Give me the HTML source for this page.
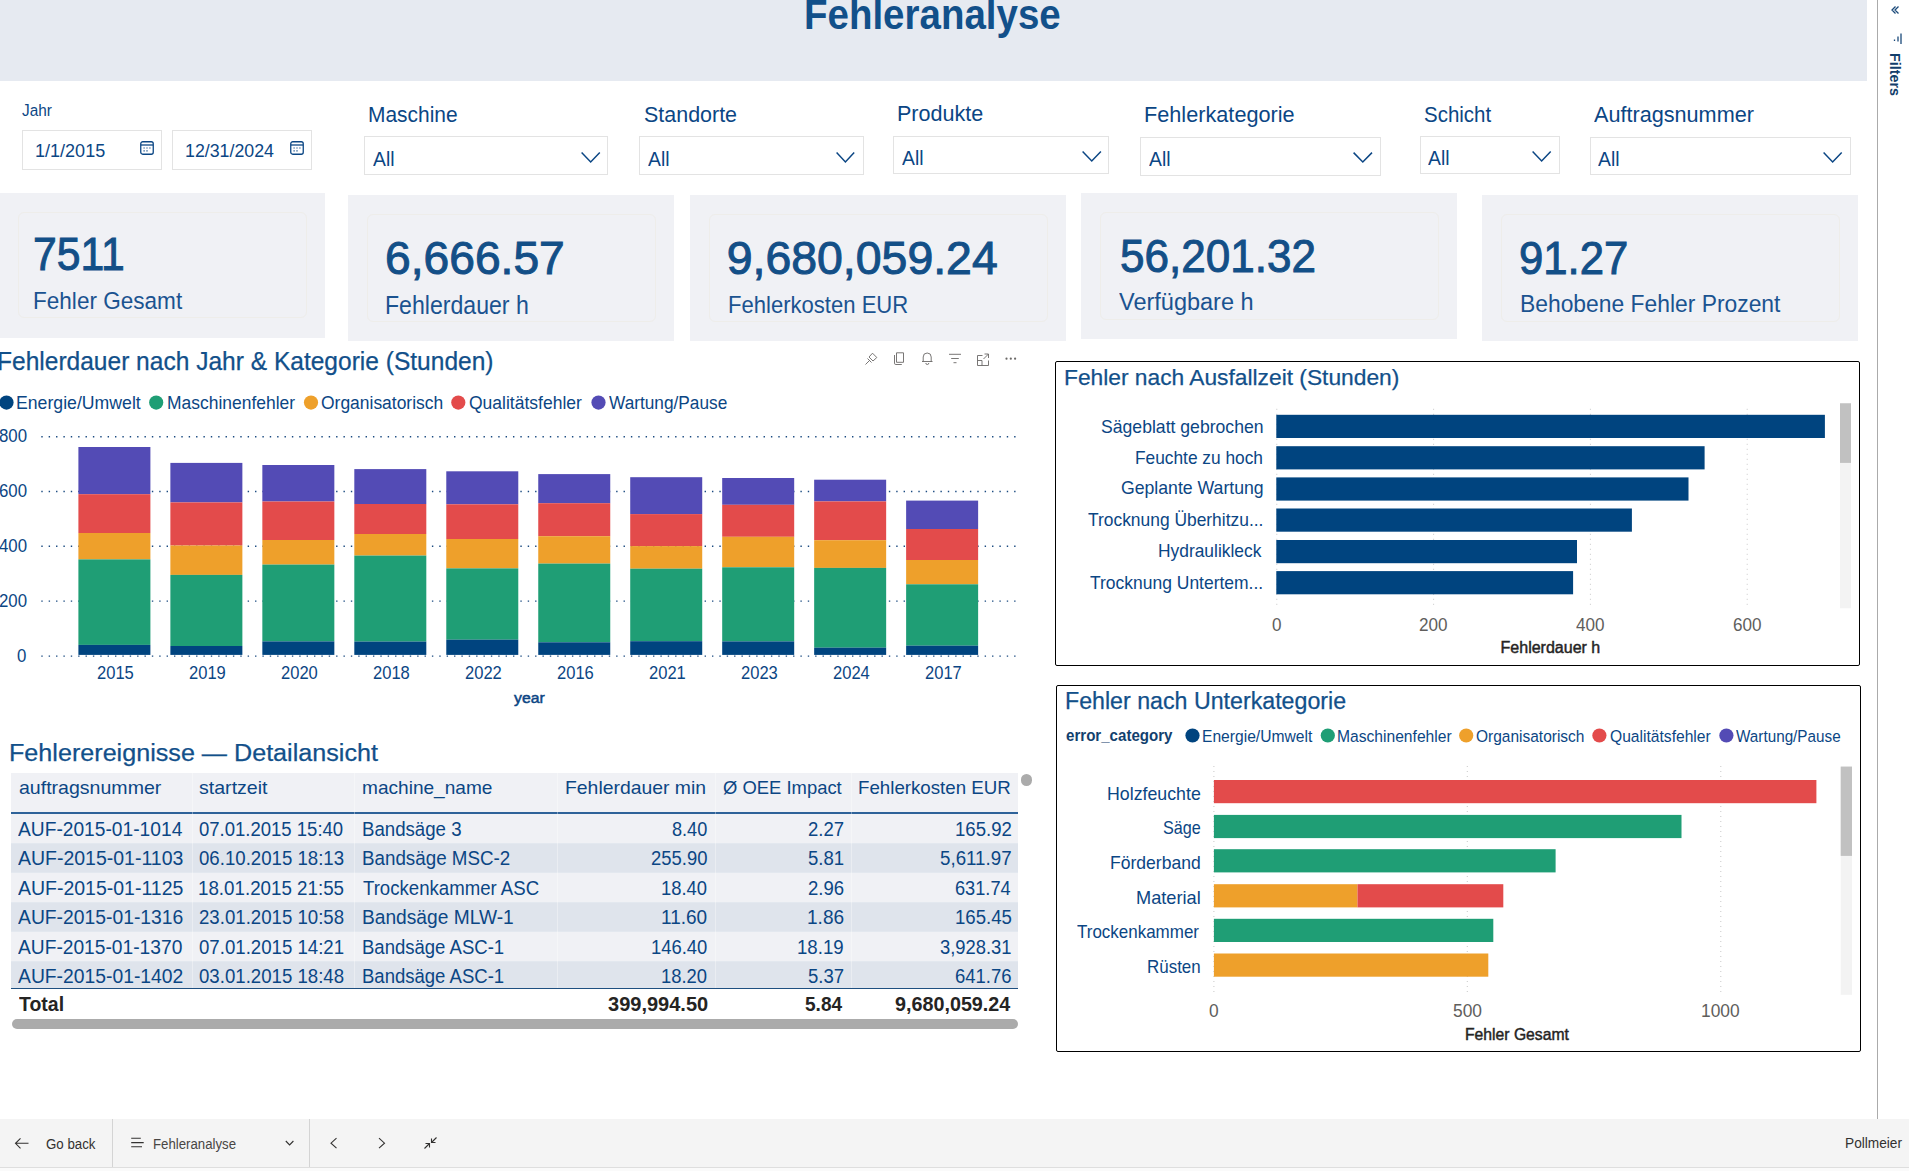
<!DOCTYPE html>
<html><head><meta charset="utf-8"><title>Fehleranalyse</title>
<style>
html,body{margin:0;padding:0;}
body{width:1909px;height:1171px;position:relative;overflow:hidden;background:#fff;font-family:'Liberation Sans', sans-serif;}
.t{position:absolute;line-height:1;white-space:nowrap;transform-origin:0 0;}
svg{position:absolute;overflow:visible;}
</style></head><body>
<div style="position:absolute;left:0px;top:0px;width:1867px;height:81px;background:#E6EAF1;"></div>
<div class="t" style="left:804.17px;top:-6.40px;font-size:42px;color:#12508A;font-weight:bold;transform:scaleX(0.9162);">Fehleranalyse</div>
<div style="position:absolute;left:1877px;top:0px;width:1px;height:1119px;background:#ABABAB;"></div>
<svg style="left:1888.5px;top:4px" width="12" height="12" viewBox="0 0 12 12"><path d="M6.5 2.5 L3 6 L6.5 9.5 M9.5 2.5 L6 6 L9.5 9.5" fill="none" stroke="#1B4A7A" stroke-width="1.3"/></svg>
<svg style="left:1890px;top:32px" width="14" height="14" viewBox="0 0 14 14"><path d="M11 1.5 V12 M8 4.5 V9.5 M4.5 7.5 V9" fill="none" stroke="#1B4A7A" stroke-width="1.3"/></svg>
<div style="position:absolute;left:1886px;top:52px;width:20px;height:50px;"><div style="position:absolute;left:15.8px;top:0.5px;transform-origin:0 0;transform:rotate(90deg);font-size:14.3px;font-weight:bold;line-height:1;color:#123E6B;white-space:nowrap;letter-spacing:0px">Filters</div></div>
<div class="t" style="left:21.50px;top:102.00px;font-size:16.43px;color:#0B4684;transform:scaleX(0.9360);">Jahr</div>
<div style="position:absolute;left:22px;top:130px;width:140px;height:40px;background:#fff;box-sizing:border-box;border:1.5px solid #E3E3E3"></div>
<div style="position:absolute;left:172px;top:130px;width:140px;height:40px;background:#fff;box-sizing:border-box;border:1.5px solid #E3E3E3"></div>
<div class="t" style="left:34.60px;top:142.00px;font-size:18.0px;color:#0B4684;transform:scaleX(1.0021);">1/1/2015</div>
<div class="t" style="left:185.41px;top:141.60px;font-size:18.0px;color:#0B4684;transform:scaleX(0.9879);">12/31/2024</div>
<svg style="left:140px;top:141px" width="14" height="14" viewBox="0 0 14 14"><rect x="0.75" y="0.75" width="12.5" height="12.5" rx="2" fill="none" stroke="#0B4684" stroke-width="1.3"/><path d="M1 4 H13" stroke="#0B4684" stroke-width="1.3"/><path d="M3.5 7 h1.2 M6.4 7 h1.2 M9.3 7 h1.2 M3.5 9.8 h1.2 M6.4 9.8 h1.2" stroke="#0B4684" stroke-width="1.2"/></svg>
<svg style="left:290px;top:141px" width="14" height="14" viewBox="0 0 14 14"><rect x="0.75" y="0.75" width="12.5" height="12.5" rx="2" fill="none" stroke="#0B4684" stroke-width="1.3"/><path d="M1 4 H13" stroke="#0B4684" stroke-width="1.3"/><path d="M3.5 7 h1.2 M6.4 7 h1.2 M9.3 7 h1.2 M3.5 9.8 h1.2 M6.4 9.8 h1.2" stroke="#0B4684" stroke-width="1.2"/></svg>
<div class="t" style="left:367.82px;top:104.90px;font-size:21.29px;color:#0B4684;transform:scaleX(0.9838);">Maschine</div>
<div style="position:absolute;left:364px;top:136px;width:244px;height:39px;background:#fff;box-sizing:border-box;border:1.5px solid #E3E3E3"></div>
<div class="t" style="left:373.00px;top:148.70px;font-size:20.29px;color:#0B4684;transform:scaleX(0.9531);">All</div>
<svg style="left:580.8px;top:151.7px" width="19.4" height="11" viewBox="0 0 19.4 11"><path d="M0.6 0.6 L9.70 10 L18.80 0.6" fill="none" stroke="#0B4684" stroke-width="1.5"/></svg>
<div class="t" style="left:643.60px;top:105.20px;font-size:21.29px;color:#0B4684;transform:scaleX(1.0082);">Standorte</div>
<div style="position:absolute;left:639px;top:136px;width:225px;height:39px;background:#fff;box-sizing:border-box;border:1.5px solid #E3E3E3"></div>
<div class="t" style="left:648.00px;top:148.60px;font-size:20.29px;color:#0B4684;transform:scaleX(0.9531);">All</div>
<svg style="left:836.0px;top:151.6px" width="18.8" height="11" viewBox="0 0 18.8 11"><path d="M0.6 0.6 L9.40 10 L18.20 0.6" fill="none" stroke="#0B4684" stroke-width="1.5"/></svg>
<div class="t" style="left:897.39px;top:104.30px;font-size:21.29px;color:#0B4684;transform:scaleX(1.0127);">Produkte</div>
<div style="position:absolute;left:893px;top:136px;width:216px;height:38px;background:#fff;box-sizing:border-box;border:1.5px solid #E3E3E3"></div>
<div class="t" style="left:901.70px;top:148.00px;font-size:20.29px;color:#0B4684;transform:scaleX(0.9531);">All</div>
<svg style="left:1081.7px;top:151.0px" width="19.5" height="11" viewBox="0 0 19.5 11"><path d="M0.6 0.6 L9.75 10 L18.90 0.6" fill="none" stroke="#0B4684" stroke-width="1.5"/></svg>
<div class="t" style="left:1143.78px;top:104.90px;font-size:21.29px;color:#0B4684;transform:scaleX(1.0190);">Fehlerkategorie</div>
<div style="position:absolute;left:1140px;top:137px;width:241px;height:39px;background:#fff;box-sizing:border-box;border:1.5px solid #E3E3E3"></div>
<div class="t" style="left:1148.80px;top:148.90px;font-size:20.29px;color:#0B4684;transform:scaleX(0.9531);">All</div>
<svg style="left:1352.9px;top:151.89999999999998px" width="19.6" height="11" viewBox="0 0 19.6 11"><path d="M0.6 0.6 L9.80 10 L19.00 0.6" fill="none" stroke="#0B4684" stroke-width="1.5"/></svg>
<div class="t" style="left:1424.00px;top:104.50px;font-size:21.29px;color:#0B4684;transform:scaleX(0.9631);">Schicht</div>
<div style="position:absolute;left:1420px;top:136px;width:140px;height:38px;background:#fff;box-sizing:border-box;border:1.5px solid #E3E3E3"></div>
<div class="t" style="left:1428.20px;top:148.20px;font-size:20.29px;color:#0B4684;transform:scaleX(0.9531);">All</div>
<svg style="left:1531.6px;top:151.2px" width="19.3" height="11" viewBox="0 0 19.3 11"><path d="M0.6 0.6 L9.65 10 L18.70 0.6" fill="none" stroke="#0B4684" stroke-width="1.5"/></svg>
<div class="t" style="left:1594.00px;top:104.90px;font-size:21.29px;color:#0B4684;transform:scaleX(1.0164);">Auftragsnummer</div>
<div style="position:absolute;left:1590px;top:137px;width:261px;height:38px;background:#fff;box-sizing:border-box;border:1.5px solid #E3E3E3"></div>
<div class="t" style="left:1598.20px;top:149.20px;font-size:20.29px;color:#0B4684;transform:scaleX(0.9531);">All</div>
<svg style="left:1822.5px;top:152.2px" width="19.3" height="11" viewBox="0 0 19.3 11"><path d="M0.6 0.6 L9.65 10 L18.70 0.6" fill="none" stroke="#0B4684" stroke-width="1.5"/></svg>
<div style="position:absolute;left:0px;top:193px;width:325px;height:145px;background:#F0F1F5;"></div>
<div style="position:absolute;left:348px;top:195px;width:326px;height:146px;background:#F0F1F5;"></div>
<div style="position:absolute;left:690px;top:195px;width:376px;height:146px;background:#F0F1F5;"></div>
<div style="position:absolute;left:1081px;top:193px;width:376px;height:146px;background:#F0F1F5;"></div>
<div style="position:absolute;left:1482px;top:195px;width:376px;height:146px;background:#F0F1F5;"></div>
<div style="position:absolute;left:18px;top:211.5px;width:288.5px;height:106.5px;background:transparent;box-sizing:border-box;border:1px solid #EEEDEA;border-radius:6px"></div>
<div style="position:absolute;left:366.5px;top:213.5px;width:289px;height:108.5px;background:transparent;box-sizing:border-box;border:1px solid #EEEDEA;border-radius:6px"></div>
<div style="position:absolute;left:708.5px;top:213.5px;width:339.5px;height:108px;background:transparent;box-sizing:border-box;border:1px solid #EEEDEA;border-radius:6px"></div>
<div style="position:absolute;left:1100px;top:211.5px;width:338.5px;height:108.5px;background:transparent;box-sizing:border-box;border:1px solid #EEEDEA;border-radius:6px"></div>
<div style="position:absolute;left:1501px;top:213.5px;width:338.5px;height:108px;background:transparent;box-sizing:border-box;border:1px solid #EEEDEA;border-radius:6px"></div>
<div class="t" style="left:32.99px;top:229.80px;font-size:47.14px;color:#134F87;transform:scaleX(0.9060);-webkit-text-stroke:1px #134F87;">7511</div>
<div class="t" style="left:32.96px;top:289.20px;font-size:24.57px;color:#1B5390;transform:scaleX(0.9183);">Fehler Gesamt</div>
<div class="t" style="left:384.91px;top:234.50px;font-size:46.43px;color:#134F87;transform:scaleX(0.9950);-webkit-text-stroke:1px #134F87;">6,666.57</div>
<div class="t" style="left:385.05px;top:292.80px;font-size:25.0px;color:#1B5390;transform:scaleX(0.9237);">Fehlerdauer h</div>
<div class="t" style="left:726.70px;top:234.70px;font-size:46.43px;color:#134F87;-webkit-text-stroke:1px #134F87;">9,680,059.24</div>
<div class="t" style="left:727.78px;top:293.00px;font-size:23.86px;color:#1B5390;transform:scaleX(0.9246);">Fehlerkosten EUR</div>
<div class="t" style="left:1120.46px;top:231.80px;font-size:47.0px;color:#134F87;transform:scaleX(0.9371);-webkit-text-stroke:1px #134F87;">56,201.32</div>
<div class="t" style="left:1118.90px;top:290.50px;font-size:23.57px;color:#1B5390;transform:scaleX(0.9976);">Verfügbare h</div>
<div class="t" style="left:1518.64px;top:233.90px;font-size:47.0px;color:#134F87;transform:scaleX(0.9297);-webkit-text-stroke:1px #134F87;">91.27</div>
<div class="t" style="left:1519.56px;top:291.80px;font-size:24.29px;color:#1B5390;transform:scaleX(0.9410);">Behobene Fehler Prozent</div>
<div class="t" style="left:-3.45px;top:349.00px;font-size:25.14px;color:#12508A;transform:scaleX(0.9766);-webkit-text-stroke:0.25px #12508A;">Fehlerdauer nach Jahr &amp; Kategorie (Stunden)</div>
<svg style="left:862px;top:350px" width="160" height="18" viewBox="862 350 160 18">
<g fill="none" stroke="#6A6866" stroke-width="0.9">
<path d="M865.5 364.5 L869.5 360.5 M867.5 358.5 L871.5 362.5 M869 357 L872.5 353.2 L876.8 357.5 L873 361 Z"/>
<path d="M896.5 352.8 h7 v9.5 h-7 z M894.5 355 v8.2 a1.3 1.3 0 0 0 1.3 1.3 h6"/>
<path d="M922 361.5 h10.5 M923.2 361.5 v-4.5 a4 4 0 0 1 8 0 v4.5 M925.8 363 a1.5 1.5 0 0 0 3 0"/>
<path d="M949 354.3 h12 M951.2 358.5 h7.6 M953.5 362.7 h3"/>
<path d="M982.5 355.5 H977.5 V365.5 H988.5 V360.5 M983.5 359 L988.5 354 M984.5 354 H988.5 V358 M977.5 360.5 H982 V365.5"/>
</g>
<g fill="#6A6866"><circle cx="1006.5" cy="358.7" r="1.1"/><circle cx="1010.8" cy="358.7" r="1.1"/><circle cx="1015.1" cy="358.7" r="1.1"/></g>
</svg>
<svg style="left:0px;top:0px" width="1" height="1" viewBox="0 0 1 1"><circle cx="6.5" cy="402.6" r="7.1" fill="#00447F"/><circle cx="156.2" cy="402.6" r="7.1" fill="#1F9E75"/><circle cx="311.0" cy="402.6" r="7.1" fill="#EEA02B"/><circle cx="458.3" cy="402.6" r="7.1" fill="#E34B4B"/><circle cx="598.5" cy="402.6" r="7.1" fill="#534BB5"/></svg>
<div class="t" style="left:16.01px;top:394.50px;font-size:17.86px;color:#0B4684;transform:scaleX(0.9897);">Energie/Umwelt</div>
<div class="t" style="left:166.52px;top:394.50px;font-size:17.86px;color:#0B4684;transform:scaleX(0.9778);">Maschinenfehler</div>
<div class="t" style="left:321.40px;top:394.50px;font-size:17.86px;color:#0B4684;transform:scaleX(0.9772);">Organisatorisch</div>
<div class="t" style="left:469.10px;top:394.50px;font-size:17.86px;color:#0B4684;transform:scaleX(0.9800);">Qualitätsfehler</div>
<div class="t" style="left:608.90px;top:394.50px;font-size:17.86px;color:#0B4684;transform:scaleX(0.9657);">Wartung/Pause</div>
<svg style="left:0px;top:0px" width="1" height="1" viewBox="0 0 1 1"><line x1="41.3" y1="436.8" x2="1018" y2="436.8" stroke="#1A4A80" stroke-width="1.4" stroke-dasharray="1.4 5.97"/><line x1="41.3" y1="491.5" x2="1018" y2="491.5" stroke="#1A4A80" stroke-width="1.4" stroke-dasharray="1.4 5.97"/><line x1="41.3" y1="546.3" x2="1018" y2="546.3" stroke="#1A4A80" stroke-width="1.4" stroke-dasharray="1.4 5.97"/><line x1="41.3" y1="601.1" x2="1018" y2="601.1" stroke="#1A4A80" stroke-width="1.4" stroke-dasharray="1.4 5.97"/><line x1="41.3" y1="656.1" x2="1018" y2="656.1" stroke="#1A4A80" stroke-width="1.4" stroke-dasharray="1.4 5.97"/><rect x="78.40" y="447" width="72" height="47.20" fill="#534BB5"/><rect x="78.40" y="494.2" width="72" height="38.80" fill="#E34B4B"/><rect x="78.40" y="533" width="72" height="26.40" fill="#EEA02B"/><rect x="78.40" y="559.4" width="72" height="85.50" fill="#1F9E75"/><rect x="78.40" y="644.9" width="72" height="10.00" fill="#00447F"/><rect x="170.37" y="462.9" width="72" height="39.50" fill="#534BB5"/><rect x="170.37" y="502.4" width="72" height="43.10" fill="#E34B4B"/><rect x="170.37" y="545.5" width="72" height="29.40" fill="#EEA02B"/><rect x="170.37" y="574.9" width="72" height="71.10" fill="#1F9E75"/><rect x="170.37" y="646" width="72" height="8.90" fill="#00447F"/><rect x="262.34" y="465" width="72" height="36.50" fill="#534BB5"/><rect x="262.34" y="501.5" width="72" height="38.50" fill="#E34B4B"/><rect x="262.34" y="540" width="72" height="24.60" fill="#EEA02B"/><rect x="262.34" y="564.6" width="72" height="76.80" fill="#1F9E75"/><rect x="262.34" y="641.4" width="72" height="13.50" fill="#00447F"/><rect x="354.31" y="469.1" width="72" height="34.90" fill="#534BB5"/><rect x="354.31" y="504" width="72" height="30.00" fill="#E34B4B"/><rect x="354.31" y="534" width="72" height="21.60" fill="#EEA02B"/><rect x="354.31" y="555.6" width="72" height="86.00" fill="#1F9E75"/><rect x="354.31" y="641.6" width="72" height="13.30" fill="#00447F"/><rect x="446.28" y="471.3" width="72" height="33.00" fill="#534BB5"/><rect x="446.28" y="504.3" width="72" height="34.70" fill="#E34B4B"/><rect x="446.28" y="539" width="72" height="29.40" fill="#EEA02B"/><rect x="446.28" y="568.4" width="72" height="71.30" fill="#1F9E75"/><rect x="446.28" y="639.7" width="72" height="15.20" fill="#00447F"/><rect x="538.25" y="474.1" width="72" height="29.10" fill="#534BB5"/><rect x="538.25" y="503.2" width="72" height="33.00" fill="#E34B4B"/><rect x="538.25" y="536.2" width="72" height="27.40" fill="#EEA02B"/><rect x="538.25" y="563.6" width="72" height="78.70" fill="#1F9E75"/><rect x="538.25" y="642.3" width="72" height="12.60" fill="#00447F"/><rect x="630.22" y="477.2" width="72" height="36.90" fill="#534BB5"/><rect x="630.22" y="514.1" width="72" height="32.00" fill="#E34B4B"/><rect x="630.22" y="546.1" width="72" height="22.60" fill="#EEA02B"/><rect x="630.22" y="568.7" width="72" height="72.50" fill="#1F9E75"/><rect x="630.22" y="641.2" width="72" height="13.70" fill="#00447F"/><rect x="722.19" y="478" width="72" height="26.80" fill="#534BB5"/><rect x="722.19" y="504.8" width="72" height="32.00" fill="#E34B4B"/><rect x="722.19" y="536.8" width="72" height="30.50" fill="#EEA02B"/><rect x="722.19" y="567.3" width="72" height="74.10" fill="#1F9E75"/><rect x="722.19" y="641.4" width="72" height="13.50" fill="#00447F"/><rect x="814.16" y="479.7" width="72" height="21.70" fill="#534BB5"/><rect x="814.16" y="501.4" width="72" height="38.80" fill="#E34B4B"/><rect x="814.16" y="540.2" width="72" height="27.70" fill="#EEA02B"/><rect x="814.16" y="567.9" width="72" height="79.80" fill="#1F9E75"/><rect x="814.16" y="647.7" width="72" height="7.20" fill="#00447F"/><rect x="906.13" y="500.6" width="72" height="28.40" fill="#534BB5"/><rect x="906.13" y="529" width="72" height="31.00" fill="#E34B4B"/><rect x="906.13" y="560" width="72" height="24.30" fill="#EEA02B"/><rect x="906.13" y="584.3" width="72" height="61.40" fill="#1F9E75"/><rect x="906.13" y="645.7" width="72" height="9.20" fill="#00447F"/></svg>
<div class="t" style="left:-1.31px;top:427.20px;font-size:18.29px;color:#0B4684;transform:scaleX(0.9200);">800</div>
<div class="t" style="left:-1.31px;top:481.90px;font-size:18.29px;color:#0B4684;transform:scaleX(0.9200);">600</div>
<div class="t" style="left:-1.31px;top:536.70px;font-size:18.29px;color:#0B4684;transform:scaleX(0.9200);">400</div>
<div class="t" style="left:-1.31px;top:591.50px;font-size:18.29px;color:#0B4684;transform:scaleX(0.9200);">200</div>
<div class="t" style="left:17.40px;top:646.50px;font-size:18.29px;color:#0B4684;transform:scaleX(0.9200);">0</div>
<div class="t" style="left:96.80px;top:663.90px;font-size:18.43px;color:#0B4684;transform:scaleX(0.8985);">2015</div>
<div class="t" style="left:188.77px;top:663.90px;font-size:18.43px;color:#0B4684;transform:scaleX(0.8985);">2019</div>
<div class="t" style="left:280.74px;top:663.90px;font-size:18.43px;color:#0B4684;transform:scaleX(0.8985);">2020</div>
<div class="t" style="left:372.71px;top:663.90px;font-size:18.43px;color:#0B4684;transform:scaleX(0.8985);">2018</div>
<div class="t" style="left:464.68px;top:663.90px;font-size:18.43px;color:#0B4684;transform:scaleX(0.8985);">2022</div>
<div class="t" style="left:556.65px;top:663.90px;font-size:18.43px;color:#0B4684;transform:scaleX(0.8985);">2016</div>
<div class="t" style="left:648.62px;top:663.90px;font-size:18.43px;color:#0B4684;transform:scaleX(0.8985);">2021</div>
<div class="t" style="left:740.59px;top:663.90px;font-size:18.43px;color:#0B4684;transform:scaleX(0.8985);">2023</div>
<div class="t" style="left:832.56px;top:663.90px;font-size:18.43px;color:#0B4684;transform:scaleX(0.8985);">2024</div>
<div class="t" style="left:924.53px;top:663.90px;font-size:18.43px;color:#0B4684;transform:scaleX(0.8985);">2017</div>
<div class="t" style="left:514.00px;top:690.00px;font-size:15.5px;color:#0B4684;transform:scaleX(1.0170);-webkit-text-stroke:0.5px #0B4684;">year</div>
<div style="position:absolute;left:1055px;top:361px;width:805px;height:305px;background:transparent;box-sizing:border-box;border:1.8px solid #000;border-radius:2px"></div>
<div class="t" style="left:1064.20px;top:366.40px;font-size:22.71px;color:#12508A;transform:scaleX(1.0026);-webkit-text-stroke:0.25px #12508A;">Fehler nach Ausfallzeit (Stunden)</div>
<svg style="left:0px;top:0px" width="1" height="1" viewBox="0 0 1 1"><line x1="1276.8" y1="408.8" x2="1276.8" y2="608.3" stroke="#C8C8C8" stroke-width="1" stroke-dasharray="1 4"/><line x1="1433.6" y1="408.8" x2="1433.6" y2="608.3" stroke="#C8C8C8" stroke-width="1" stroke-dasharray="1 4"/><line x1="1590.4" y1="408.8" x2="1590.4" y2="608.3" stroke="#C8C8C8" stroke-width="1" stroke-dasharray="1 4"/><line x1="1747.2" y1="408.8" x2="1747.2" y2="608.3" stroke="#C8C8C8" stroke-width="1" stroke-dasharray="1 4"/><rect x="1276.3" y="414.8" width="548.6" height="23.2" fill="#00447F"/><rect x="1276.3" y="446.2" width="428.3" height="23.2" fill="#00447F"/><rect x="1276.3" y="477.4" width="412.2" height="23.2" fill="#00447F"/><rect x="1276.3" y="508.5" width="355.6" height="23.2" fill="#00447F"/><rect x="1276.3" y="540.0" width="300.7" height="23.2" fill="#00447F"/><rect x="1276.3" y="571.1" width="296.8" height="23.2" fill="#00447F"/><rect x="1840" y="403.3" width="11" height="205" fill="#F3F3F3"/><rect x="1840" y="403.3" width="11" height="59.6" fill="#C1C1C1"/></svg>
<div class="t" style="left:1100.70px;top:417.60px;font-size:18.14px;color:#0B4684;transform:scaleX(0.9717);">Sägeblatt gebrochen</div>
<div class="t" style="left:1135.24px;top:448.60px;font-size:18.14px;color:#0B4684;transform:scaleX(0.9551);">Feuchte zu hoch</div>
<div class="t" style="left:1120.60px;top:479.40px;font-size:18.14px;color:#0B4684;transform:scaleX(0.9742);">Geplante Wartung</div>
<div class="t" style="left:1087.80px;top:511.00px;font-size:18.14px;color:#0B4684;transform:scaleX(0.9601);">Trocknung Überhitzu...</div>
<div class="t" style="left:1157.94px;top:542.40px;font-size:18.14px;color:#0B4684;transform:scaleX(0.9590);">Hydraulikleck</div>
<div class="t" style="left:1090.00px;top:573.60px;font-size:18.14px;color:#0B4684;transform:scaleX(0.9641);">Trocknung Untertem...</div>
<div class="t" style="left:1271.85px;top:616.40px;font-size:18.0px;color:#605E5C;transform:scaleX(0.9500);">0</div>
<div class="t" style="left:1419.24px;top:616.40px;font-size:18.0px;color:#605E5C;transform:scaleX(0.9500);">200</div>
<div class="t" style="left:1575.94px;top:616.40px;font-size:18.0px;color:#605E5C;transform:scaleX(0.9500);">400</div>
<div class="t" style="left:1732.74px;top:616.40px;font-size:18.0px;color:#605E5C;transform:scaleX(0.9500);">600</div>
<div class="t" style="left:1500.60px;top:639.70px;font-size:16.0px;color:#252423;-webkit-text-stroke:0.45px #252423;">Fehlerdauer h</div>
<div style="position:absolute;left:1056px;top:685px;width:805px;height:367px;background:transparent;box-sizing:border-box;border:1.8px solid #000;border-radius:2px"></div>
<div class="t" style="left:1064.60px;top:689.60px;font-size:23.14px;color:#12508A;transform:scaleX(1.0030);-webkit-text-stroke:0.25px #12508A;">Fehler nach Unterkategorie</div>
<div class="t" style="left:1066.00px;top:727.60px;font-size:16.57px;color:#123F6E;font-weight:bold;transform:scaleX(0.9108);">error_category</div>
<svg style="left:0px;top:0px" width="1" height="1" viewBox="0 0 1 1"><circle cx="1192.5" cy="735.5" r="7.1" fill="#00447F"/><circle cx="1327.8" cy="735.5" r="7.1" fill="#1F9E75"/><circle cx="1466.2" cy="735.5" r="7.1" fill="#EEA02B"/><circle cx="1599.4" cy="735.5" r="7.1" fill="#E34B4B"/><circle cx="1726.4" cy="735.5" r="7.1" fill="#534BB5"/><line x1="1213.9" y1="766" x2="1213.9" y2="995" stroke="#C8C8C8" stroke-width="1" stroke-dasharray="1 4"/><line x1="1467.3" y1="766" x2="1467.3" y2="995" stroke="#C8C8C8" stroke-width="1" stroke-dasharray="1 4"/><line x1="1720.8" y1="766" x2="1720.8" y2="995" stroke="#C8C8C8" stroke-width="1" stroke-dasharray="1 4"/><rect x="1213.9" y="780.0" width="602.5" height="23.2" fill="#E34B4B"/><rect x="1213.9" y="814.9" width="467.6" height="23.2" fill="#1F9E75"/><rect x="1213.9" y="849.2" width="341.7" height="23.2" fill="#1F9E75"/><rect x="1213.9" y="884.2" width="143.6" height="23.2" fill="#EEA02B"/><rect x="1357.5" y="884.2" width="145.8" height="23.2" fill="#E34B4B"/><rect x="1213.9" y="918.8" width="279.4" height="23.2" fill="#1F9E75"/><rect x="1213.9" y="953.5" width="274.4" height="23.2" fill="#EEA02B"/><rect x="1840.7" y="766.6" width="11.3" height="228.2" fill="#F3F3F3"/><rect x="1840.7" y="766.6" width="11.3" height="89.3" fill="#C1C1C1"/></svg>
<div class="t" style="left:1201.61px;top:728.60px;font-size:15.71px;color:#0B4684;transform:scaleX(0.9948);">Energie/Umwelt</div>
<div class="t" style="left:1337.01px;top:728.60px;font-size:15.71px;color:#0B4684;transform:scaleX(0.9948);">Maschinenfehler</div>
<div class="t" style="left:1476.20px;top:728.60px;font-size:15.71px;color:#0B4684;transform:scaleX(0.9860);">Organisatorisch</div>
<div class="t" style="left:1610.00px;top:728.60px;font-size:15.71px;color:#0B4684;transform:scaleX(0.9948);">Qualitätsfehler</div>
<div class="t" style="left:1735.80px;top:728.60px;font-size:15.71px;color:#0B4684;transform:scaleX(0.9720);">Wartung/Pause</div>
<div class="t" style="left:1106.67px;top:783.90px;font-size:19.0px;color:#0B4684;transform:scaleX(0.9345);">Holzfeuchte</div>
<div class="t" style="left:1162.60px;top:818.20px;font-size:19.0px;color:#0B4684;transform:scaleX(0.8515);">Säge</div>
<div class="t" style="left:1109.68px;top:853.20px;font-size:19.0px;color:#0B4684;transform:scaleX(0.9238);">Förderband</div>
<div class="t" style="left:1136.34px;top:888.20px;font-size:19.0px;color:#0B4684;transform:scaleX(0.9578);">Material</div>
<div class="t" style="left:1077.30px;top:922.20px;font-size:19.0px;color:#0B4684;transform:scaleX(0.8935);">Trockenkammer</div>
<div class="t" style="left:1146.71px;top:957.10px;font-size:19.0px;color:#0B4684;transform:scaleX(0.8920);">Rüsten</div>
<div class="t" style="left:1209.25px;top:1002.40px;font-size:18.29px;color:#605E5C;transform:scaleX(0.9500);">0</div>
<div class="t" style="left:1452.89px;top:1002.40px;font-size:18.29px;color:#605E5C;transform:scaleX(0.9500);">500</div>
<div class="t" style="left:1701.09px;top:1002.40px;font-size:18.29px;color:#605E5C;transform:scaleX(0.9500);">1000</div>
<div class="t" style="left:1465.05px;top:1027.40px;font-size:16.57px;color:#252423;transform:scaleX(0.9483);-webkit-text-stroke:0.45px #252423;">Fehler Gesamt</div>
<div class="t" style="left:9.41px;top:741.90px;font-size:23.0px;color:#12508A;transform:scaleX(1.0932);-webkit-text-stroke:0.25px #12508A;">Fehlerereignisse — Detailansicht</div>
<div style="position:absolute;left:11px;top:773px;width:1007px;height:39px;background:#F0F1F5;"></div>
<div style="position:absolute;left:11px;top:812px;width:1007px;height:2px;background:#2E6299;"></div>
<div style="position:absolute;left:11px;top:814.0px;width:1007px;height:28.6px;background:#F0F1F5;"></div>
<div style="position:absolute;left:11px;top:842.6px;width:1007px;height:0.95px;background:#E3E8EF;"></div>
<div style="position:absolute;left:11px;top:843.55px;width:1007px;height:28.6px;background:#DFE4EC;"></div>
<div style="position:absolute;left:11px;top:872.15px;width:1007px;height:0.95px;background:#E3E8EF;"></div>
<div style="position:absolute;left:11px;top:873.1px;width:1007px;height:28.6px;background:#F0F1F5;"></div>
<div style="position:absolute;left:11px;top:901.7px;width:1007px;height:0.95px;background:#E3E8EF;"></div>
<div style="position:absolute;left:11px;top:902.65px;width:1007px;height:28.6px;background:#DFE4EC;"></div>
<div style="position:absolute;left:11px;top:931.25px;width:1007px;height:0.95px;background:#E3E8EF;"></div>
<div style="position:absolute;left:11px;top:932.2px;width:1007px;height:28.6px;background:#F0F1F5;"></div>
<div style="position:absolute;left:11px;top:960.8px;width:1007px;height:0.95px;background:#E3E8EF;"></div>
<div style="position:absolute;left:11px;top:961.75px;width:1007px;height:25.85px;background:#DFE4EC;"></div>
<div style="position:absolute;left:191.5px;top:773px;width:1px;height:214.6px;background:rgba(255,255,255,0.35);"></div>
<div style="position:absolute;left:353.6px;top:773px;width:1px;height:214.6px;background:rgba(255,255,255,0.35);"></div>
<div style="position:absolute;left:556.8px;top:773px;width:1px;height:214.6px;background:rgba(255,255,255,0.35);"></div>
<div style="position:absolute;left:715.2px;top:773px;width:1px;height:214.6px;background:rgba(255,255,255,0.35);"></div>
<div style="position:absolute;left:851px;top:773px;width:1px;height:214.6px;background:rgba(255,255,255,0.35);"></div>
<div style="position:absolute;left:11px;top:987.6px;width:1007px;height:1.6px;background:#1E4F80;"></div>
<div class="t" style="left:18.90px;top:777.50px;font-size:19.0px;color:#0B4684;transform:scaleX(1.0287);">auftragsnummer</div>
<div class="t" style="left:199.40px;top:777.50px;font-size:19.0px;color:#0B4684;transform:scaleX(1.0306);">startzeit</div>
<div class="t" style="left:361.70px;top:777.50px;font-size:19.0px;color:#0B4684;transform:scaleX(1.0043);">machine_name</div>
<div class="t" style="left:564.78px;top:777.50px;font-size:19.0px;color:#0B4684;transform:scaleX(1.0199);">Fehlerdauer min</div>
<div class="t" style="left:723.10px;top:777.50px;font-size:19.0px;color:#0B4684;transform:scaleX(0.9692);">Ø OEE Impact</div>
<div class="t" style="left:857.92px;top:777.50px;font-size:19.0px;color:#0B4684;transform:scaleX(0.9843);">Fehlerkosten EUR</div>
<div class="t" style="left:18.30px;top:819.70px;font-size:19.43px;color:#0B4684;transform:scaleX(0.9882);">AUF-2015-01-1014</div>
<div class="t" style="left:199.40px;top:819.70px;font-size:19.43px;color:#0B4684;transform:scaleX(0.9531);">07.01.2015 15:40</div>
<div class="t" style="left:361.74px;top:819.70px;font-size:19.43px;color:#0B4684;transform:scaleX(0.9600);">Bandsäge 3</div>
<div class="t" style="left:672.20px;top:819.70px;font-size:19.43px;color:#0B4684;transform:scaleX(0.9316);">8.40</div>
<div class="t" style="left:807.70px;top:819.70px;font-size:19.43px;color:#0B4684;transform:scaleX(0.9541);">2.27</div>
<div class="t" style="left:954.64px;top:819.70px;font-size:19.43px;color:#0B4684;transform:scaleX(0.9583);">165.92</div>
<div class="t" style="left:18.30px;top:849.25px;font-size:19.43px;color:#0B4684;transform:scaleX(1.0029);">AUF-2015-01-1103</div>
<div class="t" style="left:199.40px;top:849.25px;font-size:19.43px;color:#0B4684;transform:scaleX(0.9594);">06.10.2015 18:13</div>
<div class="t" style="left:361.73px;top:849.25px;font-size:19.43px;color:#0B4684;transform:scaleX(0.9670);">Bandsäge MSC-2</div>
<div class="t" style="left:651.00px;top:849.25px;font-size:19.43px;color:#0B4684;transform:scaleX(0.9496);">255.90</div>
<div class="t" style="left:807.70px;top:849.25px;font-size:19.43px;color:#0B4684;transform:scaleX(0.9541);">5.81</div>
<div class="t" style="left:940.00px;top:849.25px;font-size:19.43px;color:#0B4684;transform:scaleX(0.9651);">5,611.97</div>
<div class="t" style="left:18.30px;top:878.80px;font-size:19.43px;color:#0B4684;transform:scaleX(1.0029);">AUF-2015-01-1125</div>
<div class="t" style="left:198.43px;top:878.80px;font-size:19.43px;color:#0B4684;transform:scaleX(0.9659);">18.01.2015 21:55</div>
<div class="t" style="left:362.70px;top:878.80px;font-size:19.43px;color:#0B4684;transform:scaleX(0.9579);">Trockenkammer ASC</div>
<div class="t" style="left:661.35px;top:878.80px;font-size:19.43px;color:#0B4684;transform:scaleX(0.9477);">18.40</div>
<div class="t" style="left:807.70px;top:878.80px;font-size:19.43px;color:#0B4684;transform:scaleX(0.9541);">2.96</div>
<div class="t" style="left:955.00px;top:878.80px;font-size:19.43px;color:#0B4684;transform:scaleX(0.9362);">631.74</div>
<div class="t" style="left:18.30px;top:908.35px;font-size:19.43px;color:#0B4684;transform:scaleX(0.9942);">AUF-2015-01-1316</div>
<div class="t" style="left:199.40px;top:908.35px;font-size:19.43px;color:#0B4684;transform:scaleX(0.9594);">23.01.2015 10:58</div>
<div class="t" style="left:361.71px;top:908.35px;font-size:19.43px;color:#0B4684;transform:scaleX(0.9871);">Bandsäge MLW-1</div>
<div class="t" style="left:661.32px;top:908.35px;font-size:19.43px;color:#0B4684;transform:scaleX(0.9772);">11.60</div>
<div class="t" style="left:806.72px;top:908.35px;font-size:19.43px;color:#0B4684;transform:scaleX(0.9806);">1.86</div>
<div class="t" style="left:954.64px;top:908.35px;font-size:19.43px;color:#0B4684;transform:scaleX(0.9583);">165.45</div>
<div class="t" style="left:18.30px;top:937.90px;font-size:19.43px;color:#0B4684;transform:scaleX(0.9882);">AUF-2015-01-1370</div>
<div class="t" style="left:199.40px;top:937.90px;font-size:19.43px;color:#0B4684;transform:scaleX(0.9594);">07.01.2015 14:21</div>
<div class="t" style="left:361.75px;top:937.90px;font-size:19.43px;color:#0B4684;transform:scaleX(0.9537);">Bandsäge ASC-1</div>
<div class="t" style="left:651.15px;top:937.90px;font-size:19.43px;color:#0B4684;transform:scaleX(0.9471);">146.40</div>
<div class="t" style="left:797.14px;top:937.90px;font-size:19.43px;color:#0B4684;transform:scaleX(0.9594);">18.19</div>
<div class="t" style="left:940.00px;top:937.90px;font-size:19.43px;color:#0B4684;transform:scaleX(0.9465);">3,928.31</div>
<div class="t" style="left:18.30px;top:967.45px;font-size:19.43px;color:#0B4684;transform:scaleX(0.9942);">AUF-2015-01-1402</div>
<div class="t" style="left:199.40px;top:967.45px;font-size:19.43px;color:#0B4684;transform:scaleX(0.9594);">03.01.2015 18:48</div>
<div class="t" style="left:361.75px;top:967.45px;font-size:19.43px;color:#0B4684;transform:scaleX(0.9537);">Bandsäge ASC-1</div>
<div class="t" style="left:661.35px;top:967.45px;font-size:19.43px;color:#0B4684;transform:scaleX(0.9477);">18.20</div>
<div class="t" style="left:807.70px;top:967.45px;font-size:19.43px;color:#0B4684;transform:scaleX(0.9541);">5.37</div>
<div class="t" style="left:955.00px;top:967.45px;font-size:19.43px;color:#0B4684;transform:scaleX(0.9522);">641.76</div>
<div class="t" style="left:18.90px;top:993.70px;font-size:20.29px;color:#252423;font-weight:bold;transform:scaleX(0.9610);">Total</div>
<div class="t" style="left:607.70px;top:993.70px;font-size:20.29px;color:#252423;font-weight:bold;transform:scaleX(0.9869);">399,994.50</div>
<div class="t" style="left:805.20px;top:993.70px;font-size:20.29px;color:#252423;font-weight:bold;transform:scaleX(0.9404);">5.84</div>
<div class="t" style="left:894.80px;top:993.70px;font-size:20.29px;color:#252423;font-weight:bold;transform:scaleX(0.9736);">9,680,059.24</div>
<div style="position:absolute;left:1020.5px;top:774px;width:11.5px;height:11.5px;border-radius:50%;background:#ABABAB"></div>
<div style="position:absolute;left:12.4px;top:1018.8px;width:1005.3px;height:10.2px;background:#ABABAB;border-radius:5px"></div>
<div style="position:absolute;left:0px;top:1119px;width:1909px;height:48px;background:#F4F4F4;"></div>
<div style="position:absolute;left:0px;top:1167px;width:1909px;height:1px;background:#DEDEDE;"></div>
<div style="position:absolute;left:0px;top:1168px;width:1909px;height:3px;background:#FAFAFA;"></div>
<div style="position:absolute;left:112px;top:1119px;width:1px;height:48px;background:#D4D4D4;"></div>
<div style="position:absolute;left:309px;top:1119px;width:1px;height:48px;background:#D4D4D4;"></div>
<svg style="left:0px;top:1119px" width="460" height="48" viewBox="0 1119 460 48">
<g fill="none" stroke="#323130" stroke-width="1.1">
<path d="M15.5 1143.3 H28.5 M20.5 1138.3 L15.5 1143.3 L20.5 1148.3"/>
<path d="M131.2 1138.2 H140.8 M131.2 1142.6 H143.7 M131.2 1146.8 H142"/>
<path d="M285.8 1141 L289.6 1145 L293.4 1141"/>
<path d="M336.5 1138.2 L331 1143.2 L336.5 1148.2"/>
<path d="M379 1138.2 L384.5 1143.2 L379 1148.2"/>
<path d="M424.5 1148.5 L429.5 1143.5 M425.5 1143.5 h4 v4 M436.5 1137.5 L431.5 1142.5 M431.5 1138.5 v4 h4"/>
</g></svg>
<div class="t" style="left:46.30px;top:1136.90px;font-size:14.29px;color:#323130;transform:scaleX(0.9289);">Go back</div>
<div class="t" style="left:153.27px;top:1136.90px;font-size:14.29px;color:#484644;transform:scaleX(0.9261);">Fehleranalyse</div>
<div class="t" style="left:1844.74px;top:1135.90px;font-size:14.29px;color:#323130;transform:scaleX(0.9580);">Pollmeier</div>
</body></html>
